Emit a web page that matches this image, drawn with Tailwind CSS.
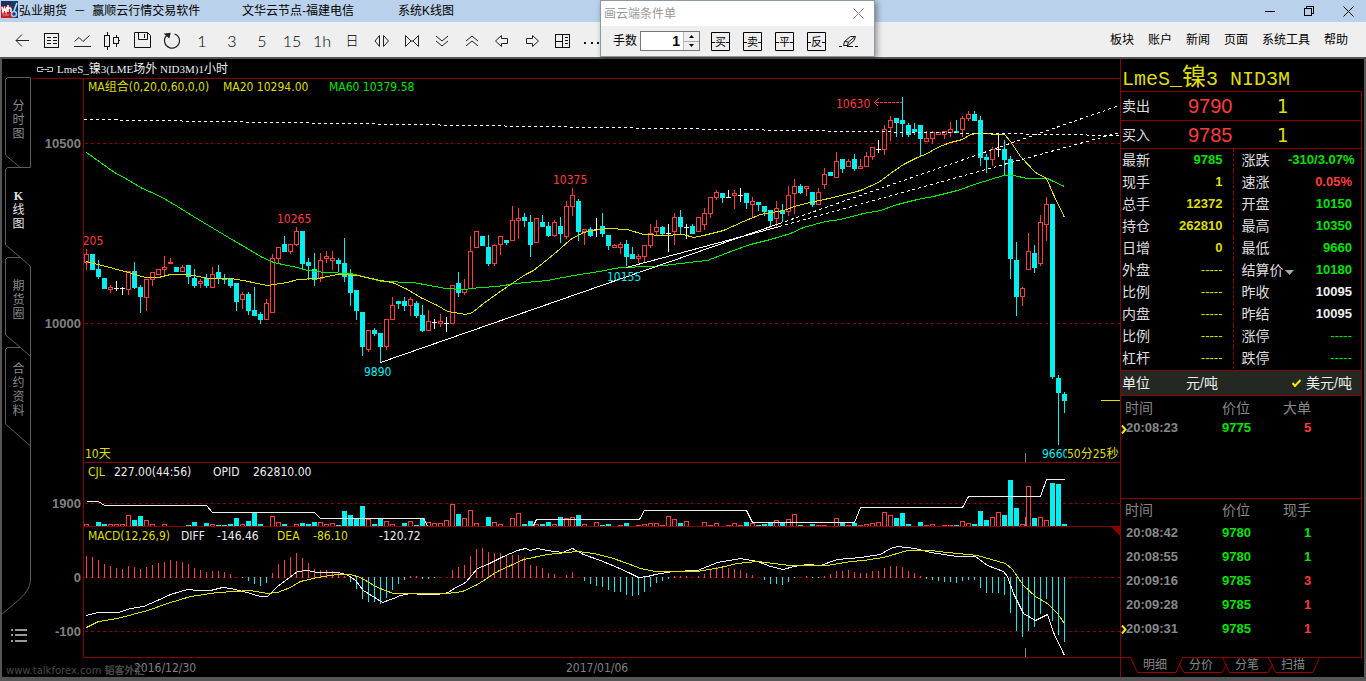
<!DOCTYPE html>
<html lang="zh-CN">
<head>
<meta charset="utf-8">
<title>弘业期货 － 赢顺云行情交易软件</title>
<script src="https://cdn.jsdelivr.net/npm/@tailwindcss/browser@4"></script>
</head>
<body class="min-h-screen flex flex-col bg-black text-xs font-['Liberation_Sans','Noto_Sans_CJK_SC',sans-serif]">

<!-- title bar -->
<header class="flex items-center h-[22px] bg-[#b9d1ea] text-black pl-px pr-3">
  <svg class="w-[17px] h-[17px] shrink-0 mr-px -mt-1" viewBox="0 0 17 17">
    <rect width="17" height="17" fill="#c81e1e"/><rect width="17" height="5" fill="#1c2f5c"/><path d="M10 0h7v17h-4l-3-7z" fill="#143a6e"/>
    <path d="M1 6l1 5 1.500-4 1.500 4 1-5M7 4v7m0-3c1-1.500 3-1.500 3 0v3" fill="none" stroke="#fff" stroke-width="1.500"/>
    <circle cx="13" cy="13" r="2.500" fill="none" stroke="#9ecbf5" stroke-width="1.500"/><path d="M16 2l-3 8" stroke="#cfe4fa" stroke-width="1.500"/>
    <path d="M2 14h6" stroke="#e88" />
  </svg>
  <h1 class="w-[223px] whitespace-pre shrink-0 leading-5">弘业期货  －  赢顺云行情交易软件</h1>
  <span class="w-[156px] shrink-0 leading-5">文华云节点-福建电信</span>
  <span class="leading-5">系统K线图</span>
  <div class="ml-auto flex gap-[29px]">
    <button aria-label="最小化" class="block"><svg class="w-[10px] h-[11px]" viewBox="0 0 10 11" stroke="#000" shape-rendering="crispEdges"><path d="M0 5.500h10"/></svg></button>
    <button aria-label="还原" class="block"><svg class="w-[10px] h-[11px]" viewBox="0 0 10 11" stroke="#000" fill="none" shape-rendering="crispEdges"><path d="M.5 2.500h7v7h-7zM2.500 2V.5h7v7H8"/></svg></button>
    <button aria-label="关闭" class="block"><svg class="w-[11px] h-[11px]" viewBox="0 0 11 11" stroke="#000" fill="none"><path d="M.5.500l10 10M10.500.500l-10 10"/></svg></button>
  </div>
</header>

<!-- toolbar -->
<div class="flex items-center justify-between h-[37px] bg-[#efefef] border-b-2 border-[#555] pl-[7px] pr-[18px] text-black">
  <div class="flex items-center h-8 mt-0.5 *:w-[30px] *:h-6 *:flex *:items-center *:justify-center *:shrink-0 text-base font-['Lato','Noto_Sans_CJK_SC',sans-serif] font-light">
    <button aria-label="返回"><svg class="size-5" viewBox="0 0 20 20" fill="none" stroke="#222"><path d="M4 9.500h13M10 3.500l-6 6 6 6"/></svg></button>
    <button aria-label="报价"><svg class="size-5" viewBox="0 0 20 20" fill="none" stroke="#111" shape-rendering="crispEdges"><path d="M2.500 2.500h14v14h-14zM5 6.500h4M11 6.500h4M5 9.500h4M11 9.500h4M5 12.500h4M11 12.500h4"/></svg></button>
    <button aria-label="分时"><svg class="size-5" viewBox="0 0 20 20" fill="none" stroke="#222"><path d="M2.500 10.500l4.500-4 4 4 6.500-6M2 15.500h17"/></svg></button>
    <button aria-label="K线"><svg class="size-5" viewBox="0 0 20 20" fill="none" stroke="#111" shape-rendering="crispEdges"><path d="M2.500 4.500h5v11h-5zM5.500 1v3M5.500 16v3M11.500 6.500h5v6h-5zM14.500 4v2M14.500 13v3M17 9.500h1"/></svg></button>
    <button aria-label="保存"><svg class="size-5" viewBox="0 0 20 20" fill="none" stroke="#111"><path d="M2.500 1.500h13l3 3v12h-16zM6.500 1.500v7h9v-7M12.500 3v4"/></svg></button>
    <button aria-label="刷新"><svg class="size-5" viewBox="0 0 20 20" fill="none" stroke="#222" stroke-width="1.200"><path d="M12.500 3c3 1 5 3.500 5 6.500a7.500 7.500 0 1 1-13-5"/><path d="M3 3l5-.5-1 4z" fill="#222"/></svg></button>
    <button>1</button><button>3</button><button>5</button><button>15</button><button>1h</button>
    <button class="text-[13px]">日</button>
    <button aria-label="缩小"><svg class="size-5" viewBox="0 0 20 20" fill="none" stroke="#222"><path d="M7.500 4.500v11L3 10zM11.500 4.500v11L16.500 10z"/></svg></button>
    <button aria-label="放大"><svg class="size-5" viewBox="0 0 20 20" fill="none" stroke="#222"><path d="M3.500 4.500v11L9 10zM16.500 4.500v11L11 10zM9 10h2"/></svg></button>
    <button aria-label="向下"><svg class="size-5" viewBox="0 0 20 20" fill="none" stroke="#222"><path d="M4 5l6 5 6-5M4 10l6 5 6-5"/></svg></button>
    <button aria-label="向上"><svg class="size-5" viewBox="0 0 20 20" fill="none" stroke="#222"><path d="M4 10l6-5 6 5M4 15l6-5 6 5"/></svg></button>
    <button aria-label="左移"><svg class="size-5" viewBox="0 0 20 20" fill="none" stroke="#222"><path d="M3.500 10l6-5.500v3h6v5h-6v3z"/></svg></button>
    <button aria-label="右移"><svg class="size-5" viewBox="0 0 20 20" fill="none" stroke="#222"><path d="M16.500 10l-6-5.500v3h-6v5h6v3z"/></svg></button>
    <button aria-label="布局"><svg class="size-5" viewBox="0 0 20 20" fill="none" stroke="#111" shape-rendering="crispEdges"><path d="M3.500 3.500h14v13h-14zM10.500 3v13M3 10.500h7M13 6.500h3M13 9.500h3M13 12.500h3"/></svg></button>
    <button aria-label="更多"><svg class="size-5" viewBox="0 0 20 20" fill="#111"><path d="M2 11h2v2H2zM9 11h2v2H9zM15 11h2v2h-2z"/></svg></button>
  </div>
  <nav class="flex gap-[14px]">
    <a href="#">板块</a><a href="#">账户</a><a href="#">新闻</a><a href="#">页面</a><a href="#">系统工具</a><a href="#">帮助</a>
  </nav>
</div>

<!-- floating order dialog -->
<section class="absolute left-[600px] top-0 w-[275px] border border-[#8a98a8] bg-[#efefef] shadow-[2px_2px_6px_rgba(0,0,0,0.4)] text-black" aria-label="画云端条件单">
  <div class="flex items-center justify-between h-[25px] bg-white pl-[3px] pr-[10px] text-[#999]">
    <h2>画云端条件单</h2>
    <button aria-label="关闭对话框"><svg class="size-[11px]" viewBox="0 0 11 11" stroke="#888" fill="none"><path d="M.5.500l10 10M10.500.500l-10 10"/></svg></button>
  </div>
  <div class="flex items-center h-[30px] pl-3">
    <label for="lots" class="mr-[3px]">手数</label>
    <div class="flex w-[60px] h-5 border border-[#777] bg-white mr-[11px]">
      <input id="lots" value="1" class="w-[42px] text-right pr-[3px] text-sm font-bold outline-none">
      <div class="flex flex-col w-4 bg-[#efefef] border-l border-[#bbb]">
        <button aria-label="增加" class="flex-1 flex items-center justify-center border-b border-[#aaa]"><svg class="w-[5px] h-[3px]" viewBox="0 0 5 3"><path d="M2.500 0L5 3H0z"/></svg></button>
        <button aria-label="减少" class="flex-1 flex items-center justify-center"><svg class="w-[5px] h-[3px]" viewBox="0 0 5 3"><path d="M2.500 3L5 0H0z"/></svg></button>
      </div>
    </div>
    <div class="flex gap-[13px] *:size-[19px]">
      <button><svg viewBox="0 0 19 19" fill="none" stroke="#000"><path d="M.5.500h18v18H.5zM1 10.500h3M15 10.500h3"/><text x="4" y="14" font-size="11" fill="#000" stroke="none">买</text></svg></button>
      <button><svg viewBox="0 0 19 19" fill="none" stroke="#000"><path d="M.5.500h18v18H.5zM1 10.500h3M15 10.500h3"/><text x="4" y="14" font-size="11" fill="#000" stroke="none">卖</text></svg></button>
      <button><svg viewBox="0 0 19 19" fill="none" stroke="#000"><path d="M.5.500h18v18H.5zM1 10.500h3M15 10.500h3"/><text x="4" y="14" font-size="11" fill="#000" stroke="none">平</text></svg></button>
      <button><svg viewBox="0 0 19 19" fill="none" stroke="#000"><path d="M.5.500h18v18H.5zM1 10.500h3M15 10.500h3"/><text x="4" y="14" font-size="11" fill="#000" stroke="none">反</text></svg></button>
      <button aria-label="擦除"><svg viewBox="0 0 19 19" fill="none" stroke="#111"><path d="M0 14.500h3M8 14.500h6M16 14.500h3M4.500 13.500l1-4 6-5h5l-1.500 4-6 5zM5.500 9.500l4 .5 6-5M9.500 10l-1 3"/></svg></button>
    </div>
  </div>
</section>

<!-- workspace -->
<main class="flex flex-1 border-x-2 border-b-4 border-[#555]">

  <!-- page tabs -->
  <nav class="relative w-[29px] shrink-0 pt-[18px] text-[#888]">
    <svg class="absolute left-0 top-0 w-[29px] h-[618px]" viewBox="2 59 29 618" fill="none" stroke="#5c5c5c">
      <path d="M19.500 167l-14-12V79.500l2-2h23v90h-23l-2 2V245l15 12.500h-13l-2 2V335l15 12.500h-13l-2 2V424l25 22M20.500 257.500l10 9V578c0 6-2 11-6 16l-7 7-15.500 13M20.500 347.500l10 9"/>
    </svg>
    <div class="relative flex flex-col *:h-[90px] *:pl-[10px] *:pr-[6px] *:pb-1 *:leading-[14px] *:break-all">
      <button>分时图</button>
      <button class="text-[#e4e4e4] font-['Liberation_Serif','Noto_Sans_CJK_SC',serif]"><b>K</b><br>线<br>图</button>
      <button>期货圈</button>
      <button>合约资料</button>
    </div>
    <button aria-label="列表" class="relative block ml-[9px] mt-[192px]"><svg class="w-4 h-[13px]" viewBox="0 0 16 13" fill="#999"><path d="M0 0h2v2H0zM4 0h12v2H4zM0 5h2v2H0zM4 5h12v2H4zM0 11h2v2H0zM4 11h12v2H4z"/></svg></button>
  </nav>

  <!-- charts -->
  <section class="relative flex-1 min-w-0 font-['DejaVu_Sans_Condensed','Noto_Sans_CJK_SC',sans-serif]">
    <div class="flex items-center h-[19px] pl-[6px] pt-px text-[11px] text-[#eee] font-['Liberation_Serif','Noto_Sans_CJK_SC',serif]">
      <svg class="w-4 h-[5px] mr-1" viewBox="0 0 16 5" fill="none" stroke="#bbb"><path d="M6 .5H.5v4H6M10 .5h5.500v4H10M4 2.500h8"/></svg>
      <span>LmeS_<span class="text-xs">镍</span>3(LME<span class="text-xs">场外</span> NID3M)1<span class="text-xs">小时</span></span>
    </div>

    <div class="relative">
      <svg id="price" class="block w-full h-auto" viewBox="31 78 1089 384" font-size="12" aria-label="K线"></svg>
      <div class="absolute left-[57px] top-px flex gap-2 whitespace-pre leading-4 text-[#dede00]">
        <span class="w-[127px]">MA组合(0,20,0,60,0,0)</span><span class="w-[98px]">MA20 10294.00</span><span class="text-[#00e400]">MA60 10379.58</span>
      </div>
      <span class="absolute left-[54px] bottom-0 leading-4 text-[#dede00]">10天</span>
      <span class="absolute right-0 bottom-0 w-[53px] leading-4 whitespace-nowrap text-[#dede00] bg-black">50分25秒</span>
    </div>
    <div class="relative">
      <svg id="volume" class="block w-full h-auto" viewBox="31 462 1089 64" font-size="12" aria-label="成交量"></svg>
      <div class="absolute left-[57px] top-0.5 flex leading-4 text-[#eee]">
        <span class="w-[26px] text-[#dede00]">CJL</span><span class="w-[99px]">227.00(44:56)</span><span class="w-10">OPID</span><span>262810.00</span>
      </div>
    </div>
    <div class="relative">
      <svg id="macd" class="block w-full h-auto" viewBox="31 526 1089 151" font-size="12" aria-label="MACD"></svg>
      <div class="absolute left-[57px] top-0.5 flex leading-4 text-[#eee]">
        <span class="w-[93px] text-[#dede00]">MACD(12,26,9)</span><span class="w-9">DIFF</span><span class="w-[60px]">-146.46</span><span class="w-9 text-[#dede00]">DEA</span><span class="w-[66px] text-[#dede00]">-86.10</span><span>-120.72</span>
      </div>
      <span class="absolute -left-[25px] bottom-0 leading-[13px] text-[#4a4a4a] whitespace-nowrap font-['DejaVu_Sans','Noto_Sans_CJK_SC',sans-serif] text-[10px]">www.talkforex.com <b>韬客外汇</b></span>
    </div>
  </section>

  <!-- quote panel -->
  <aside class="w-[244px] shrink-0 border-l border-[#8b0000] pr-[2px] text-sm text-[#dedede]">
    <h2 class="h-8 leading-9 pl-px text-2xl text-[#dede00] whitespace-nowrap"><span class="font-['Liberation_Mono'] text-xl">LmeS_</span>镍<span class="font-['Liberation_Mono'] text-xl">3 NID3M</span></h2>
    <div class="border border-l-0 border-[#8b0000]">
      <dl class="grid grid-cols-[66px_89px_1fr] items-center h-7 pl-px text-xl">
        <dt class="text-sm">卖出</dt><dd class="text-[#ff3c3c]">9790</dd><dd class="text-[#dede00] font-['DejaVu_Sans_Condensed']">1</dd>
      </dl>
      <dl class="grid grid-cols-[66px_89px_1fr] items-center h-[29px] pl-px text-xl border-y border-[#8b0000]">
        <dt class="text-sm">买入</dt><dd class="text-[#ff3c3c]">9785</dd><dd class="text-[#dede00] font-['DejaVu_Sans_Condensed']">1</dd>
      </dl>
      <table class="w-full table-fixed whitespace-nowrap text-left mb-px">
        <colgroup><col class="w-[51px]"><col class="w-[61px]"><col class="w-[55px]"><col></colgroup>
        <tbody id="quote"></tbody>
      </table>
      <div class="flex items-center h-[26px] pl-px pr-[9px] border-y border-[#8b0000] bg-[#232823] text-[#eee]">
        <span class="w-16">单位</span><button>元/吨</button>
        <button class="ml-auto flex items-center gap-[5px]"><svg class="w-[9px] h-2" viewBox="0 0 9 8" fill="none" stroke="#ee0" stroke-width="2"><path d="M.5 4l2.500 3L8.500 1"/></svg>美元/吨</button>
      </div>
      <div class="h-[102px]">
        <table class="w-full table-fixed text-left text-[#888]">
          <colgroup><col class="w-[101px]"><col class="w-[61px]"><col></colgroup>
          <thead><tr class="h-[23px] [&>th]:font-normal"><th class="pl-1">时间</th><th>价位</th><th>大单</th></tr></thead>
          <tbody id="big" class="text-[13px] font-bold"></tbody>
        </table>
      </div>
      <div class="h-[159px] border-t border-[#8b0000]">
        <table class="w-full table-fixed text-left text-[#888]">
          <colgroup><col class="w-[101px]"><col class="w-[61px]"><col></colgroup>
          <thead><tr class="h-[22px] [&>th]:font-normal"><th class="pl-1">时间</th><th>价位</th><th>现手</th></tr></thead>
          <tbody id="ticks" class="text-[13px] font-bold"></tbody>
        </table>
      </div>
    </div>
    <div class="relative -mt-px h-4 text-xs text-[#888]">
      <svg class="absolute left-0 top-0 w-[241px] h-4" viewBox="0 0 241 16" fill="none" stroke="#a00000"><path d="M9.500.500l7 15H55l6.500-15M58 7l5 8.500h38l5-8.500M101.500.500l7 15H147l5-8.500M147.500.500l7 15H192l6.500-15"/><path d="M10 .5h51" stroke="#000"/></svg>
      <div class="relative flex gap-[22px] pl-[22px] leading-4"><button>明细</button><button>分价</button><button>分笔</button><button>扫描</button></div>
    </div>
  </aside>
</main>

<script>
const RED='#ff3c3c', CYAN='#00f0f0', WHITE='#eeeeee', YEL='#dede00', GRN='#00f000', AXIS='#8b0000';
// one entry per hour: colour, high, body top, body bottom, low
const candles=`r249,254,262,270 c254,254,270,270 c260,269,277,279 c278,278,289,289 r285,287,289,293 w281,288,288,291 w287,288,288,295 r271,271,289,295 c262,271,288,289 c285,287,297,313
r279,279,297,311 r272,272,279,286 r269,269,274,274 r256,267,269,277 r258,262,263,263 c267,267,272,272 r265,267,271,271 c265,265,277,284 c269,278,286,288 r279,281,283,288
c274,278,286,288 r267,274,287,287 c265,272,279,284 c274,278,280,284 c278,279,286,288 c283,283,302,311 r292,294,299,309 c292,294,311,315 c287,310,316,316 c312,314,320,324
r299,303,319,319 r254,258,312,312 r247,247,258,263 c236,244,252,252 r244,244,251,254 r227,231,244,246 c231,231,264,269 c258,262,266,280 c253,269,280,286 r253,260,278,282
r251,256,258,263 r251,258,260,270 c258,260,264,272 c238,263,277,282 c269,273,293,306 c290,290,311,320 c312,312,347,356 r330,330,349,352 c328,330,334,336 c333,333,347,362
r319,319,346,350 r297,305,319,319 c301,301,304,309 c297,301,306,311 r297,299,305,316 c301,303,316,318 c305,315,331,332 r310,321,330,330 w319,322,322,329 r314,321,323,327
w317,323,323,332 r285,285,323,323 c272,283,293,297 r279,289,292,295 r236,251,288,288 r231,231,247,247 c236,236,246,246 c235,247,264,266 r244,245,263,266 r236,236,244,255
c240,240,243,245 r206,220,240,240 r208,218,220,239 c213,217,221,227 c215,222,245,257 r218,218,242,242 c215,222,227,227 c222,226,236,237 r220,222,235,237 c217,226,234,243
r201,206,236,239 r188,195,206,216 c199,201,232,241 r229,229,231,245 c227,229,236,237 w218,229,229,237 c213,226,234,237 c235,235,246,250 r244,245,247,247 r242,244,247,254
c240,244,257,266 c247,254,259,259 r254,256,258,263 r245,245,256,263 r224,233,245,248 r220,227,231,236 c226,227,234,236 w224,233,233,252 r213,217,231,245 c210,217,227,234
w224,227,227,239 c224,226,234,234 r217,217,231,231 r208,213,224,230 r197,197,213,218 r190,192,197,200 c193,193,198,203 w190,197,197,198 r190,193,195,209 w188,195,195,202
c193,193,203,209 r197,201,204,217 c202,202,205,211 c206,206,212,216 c210,210,221,227 r201,208,218,227 c204,210,214,222 r186,195,211,216 r179,186,193,214 c184,186,193,194
r186,186,188,196 c192,192,205,207 r188,192,204,204 r168,174,184,189 c172,172,176,176 r152,161,177,177 c159,159,169,173 r159,161,166,166 c154,159,169,171 r159,166,168,168
r152,156,166,166 r147,147,156,160 w140,149,149,153 r125,129,149,155 r116,120,127,141 c118,118,123,137 c97,120,124,137 c123,125,135,137 c123,129,132,135 c125,125,139,156
r131,138,141,141 r131,132,138,144 r132,132,134,134 r131,131,134,139 r122,129,132,137 c120,131,133,133 r116,118,129,137 r111,114,118,121 c111,114,121,121 c116,120,158,166
c154,157,160,173 r147,149,159,166 w133,149,149,157 c140,149,160,176 c156,159,259,279 c242,260,297,316 r287,288,296,306 r233,251,269,269 c245,253,268,273 r215,222,263,266
r197,204,224,241 c204,204,377,379 c375,378,393,445 c392,394,401,413`.split(/\s+/).map(s=>[s[0],...s.slice(1).split(',').map(Number)]);
// index, colour, bar top
const volumes=`0r524 2c522 3c524 4r524 5r524 6r524 7r515 8c520 9c516 10r520 11r524 13r524 17c525 18c522 20c523 21r524 22c525 23c525 24c524 25c518 26r524 27c521 28c512 29c524 31r516 32r522 33c524 35r524 36c523 37c524 38c522 39r522 40r524 41r523 42c525 43c511 44c515 45c519 46c506 47r519 48c524 49c519 50r521 51r524 53c523 54r521 55c525 56c518 57r522 58r523 59r523 60r520 61r504 62c514 63r518 64r510 65r523 67c517 68r522 69r524 71r518 72r513 73c524 74c521 75r524 76c524 77c522 78r524 79c517 80r518 81r517 82c515 83r524 85r522 86c525 87c524 89r525 90c523 92r525 93r524 94r523 95r523 96r525 97r516 98r519 99c523 100r521 103r522 104r525 105r523 107r525 108r523 109r525 110c522 111r523 112c525 113c524 114c523 115r520 116c522 117r519 118r514 119c525 121c524 122r525 123r525 125r518 126c522 127r525 128c523 129r525 130r524 131r523 132r522 133r512 134r515 135c518 136c513 137c524 139c522 140r525 141r524 143r525 144r525 145c525 146r521 147r523 148c524 149c511 150c520 151r517 152r512 153c515 154c480 155c508 156r524 157r486 158c518 159r517 160r520 161c483 162c484 163c524`.split(' ').map(s=>s.match(/(\d+)(\w)(\d{3})$/)).map(m=>[+m[1],m[2],+m[3]]);
const hist=[556,557,560,564,566,568,569,566,567,569,567,565,563,562,560,561,562,564,568,570,572,571,571,572,574,577,578,581,584,586,583,573,564,560,557,553,558,563,569,570,570,571,573,576,582,589,599,602,602,604,598,590,584,580,576,576,579,579,578,577,577,570,567,565,556,549,548,552,553,553,556,555,555,557,565,566,568,573,574,577,575,572,577,581,584,586,587,590,592,592,595,596,595,592,587,583,581,579,576,576,576,577,576,574,570,567,567,568,569,570,573,575,577,580,584,584,585,582,578,577,576,578,578,576,574,571,571,570,572,573,573,571,571,568,566,566,567,571,573,576,579,580,581,582,582,583,581,580,580,588,593,593,593,595,613,631,637,631,627,614,599,621,635,642];
const X=i=>86+6*i;
const rect=(x,y,w,h,f)=>`<rect x="${x}" y="${y}" width="${w}" height="${h}" fill="${f}"/>`;
const box=(x,y,w,h)=>`<path d="M${x+.5} ${y+.5}h${w}v${h}h${-w}z" fill="#000" stroke="${RED}"/>`;
const line=(p,c,d)=>`<polyline transform="translate(.5 .5)" points="${p}" fill="none" stroke="${c}"${d?` stroke-dasharray="${d}"`:''}/>`;
const text=(x,y,t,c,a)=>`<text x="${x}" y="${y}" fill="${c}"${a||''}>${t}</text>`;
const axis=(y,t)=>text(81,y+5,t,'#808080',' text-anchor="end" font-family="Liberation Sans" font-weight="bold" font-size="13"');
const crisp=s=>`<g shape-rendering="crispEdges">${s}</g>`;
const frame=(a,b)=>rect(83,a,1,b-a,AXIS);
const grid=y=>line(`84,${y} 1120,${y}`,AXIS,'3 3');

let s=frame(78,462)+rect(33,78,1087,1,AXIS)+grid(143)+grid(323);
candles.forEach(([k,h,t,b,l],i)=>{const x=X(i),c=k=='r'?RED:k=='c'?CYAN:WHITE;
  s+=rect(x,h,1,Math.max(1,l-h),c);
  if(k=='w') s+=rect(x-2,t,5,1,c);
  else if(k=='c') s+=rect(x-2,t,5,Math.max(1,b-t),c);
  else s+=box(x-2,t,4,b-t);});
s+=line('86,152 114,172 127,179 140,187 151,192 160,196 177,206 193,216 213,228 233,240 247,248 260,256 273,262 287,265 297,267 307,270 325,272 350,273 358,275 382,281 413,282 445,288 463,289 480,287 497,286 515,283 547,280 573,275 593,272 620,267 650,266 663,265 697,261 707,260 720,255 733,250 750,244 770,239 790,233 803,227 825,221 840,219 863,213 880,210 897,204 917,199 933,196 957,190 977,183 1003,175 1013,175 1027,178 1047,178 1053,181 1064,186',GRN);
s+=line('86,261 113,268 128,272 145,277 158,277 170,274 188,274 208,278 230,278 243,280 257,283 267,285 287,282 297,279 317,278 337,274 357,275 380,280 392,282 407,289 420,297 437,305 447,311 465,314 472,312 483,303 497,293 510,284 525,274 533,270 547,259 560,248 570,239 583,232 593,230 607,228 627,229 643,234 663,235 683,234 693,237 703,235 723,230 743,221 760,214 783,210 797,205 810,202 833,197 860,190 878,182 890,173 903,164 917,157 927,153 937,147 950,142 962,139 970,134 977,133 1004,134 1010,141 1020,156 1035,172 1046,178 1053,194 1064,217',YEL);
s+=line('380,362 779,223','#fff')+line('779,223 1119,105','#fff','3 3')+line('626,267 779,226','#fff')+line('779,226 1119,132','#fff','3 3')+line('84,119 1119,135','#fff','3 3');
s+=rect(1101,400,19,1,YEL)+rect(1025,453,1,9,'#888')+line('875,102 901,102',RED,'3 1')+line('878,98 874,102 878,106',RED);
price.innerHTML=crisp(s)+`<svg x="84" y="78" width="1036" height="384" viewBox="84 78 1036 384">${text(69,245,'10205',RED)}</svg>`+text(277,223,'10265',RED)+text(364,376,'9890',CYAN)+text(553,184,'10375',RED)+text(607,281,'10155',CYAN)+text(836,108,'10630',RED)+text(1042,458,'9660',CYAN)+axis(143,'10500')+axis(323,'10000');

s=frame(462,526)+rect(84,462,1036,1,AXIS)+grid(503);
volumes.forEach(([i,k,t])=>{s+=k=='c'?rect(X(i)-2,t,5,526-t,CYAN):box(X(i)-2,t,4,530-t)});
s+=line('86,501 98,501 104,505 206,505 212,512 314,512 320,518 423,518 428,527',WHITE)+line('532,527 536,519 639,519 644,510 746,510 752,522 854,522 860,507 962,507 968,496 1040,496 1046,479 1064,479',WHITE)+rect(1025,517,1,9,'#888');
volume.innerHTML=crisp(s)+axis(503,'1900');

s=frame(526,658)+rect(84,526,1036,1,AXIS)+rect(83,657,1037,1,AXIS)+grid(577)+grid(631)+`<path d="M1110 526h10v10z" fill="#8b0000"/>`;
hist.forEach((y,i)=>{if(y<577)s+=rect(X(i),y,1,578-y,RED);else if(y>577)s+=rect(X(i),577,1,y-577,CYAN)});
s+=line('86,615 97,612 118,612 130,608 143,606 157,600 170,594 187,589 197,590 210,590 222,587 230,588 243,591 260,596 267,596 277,586 297,571 307,570 317,572 338,572 348,575 355,580 363,590 382,602 393,598 400,595 410,593 423,594 437,594 448,592 452,589 465,582 477,568 487,564 503,556 517,550 525,548 530,550 537,548 547,550 562,552 572,548 583,554 600,560 617,567 630,573 638,577 647,576 655,574 673,571 697,570 717,562 740,558 757,561 770,566 783,569 793,566 807,564 820,565 837,559 860,557 880,554 890,548 897,546 915,548 930,552 957,556 975,556 987,565 1003,571 1007,576 1013,593 1023,613 1035,620 1047,614 1053,632 1064,655',WHITE);
s+=line('86,627 98,621 117,618 147,610 167,603 190,596 217,592 250,590 267,593 277,592 290,587 300,581 317,577 337,574 350,574 360,577 377,587 393,593 447,593 462,591 477,584 497,571 523,559 547,554 577,551 593,553 610,557 627,563 640,568 655,571 697,571 720,567 737,563 757,561 790,565 827,565 850,561 863,560 883,557 907,550 930,550 947,552 977,555 1005,563 1012,569 1023,585 1035,596 1047,603 1057,613 1064,623',YEL);
s+=rect(1025,648,1,9,'#888');
macd.innerHTML=crisp(s)+axis(577,'0')+axis(631,'-100')+text(134,672,'2016/12/30','#808080')+text(566,672,'2017/01/06','#808080');

const tone={g:'text-[#00e400]',r:'text-[#ff3c3c]',y:'text-[#dede00]',w:'text-[#eeeeee]'};
const D='-----';
quote.innerHTML=[['最新','9785','g','涨跌','-310/3.07%','g'],['现手','1','y','速涨','0.05%','r'],['总手','12372','y','开盘','10150','g'],['持仓','262810','y','最高','10350','g'],['日增','0','y','最低','9660','g'],['外盘',D,'y','结算价','10180','g'],['比例',D,'y','昨收','10095','w'],['内盘',D,'y','昨结','10095','w'],['比例',D,'y','涨停',D,'g'],['杠杆',D,'y','跌停',D,'g']]
 .map(([a,b,c,d,e,f])=>`<tr class="h-[22px] leading-[22px]"><th class="font-normal pl-px">${a}</th><td class="text-right pr-[10px] text-[13px] ${b==D?'':'font-bold'} ${tone[c]}">${b}</td><th class="font-normal pl-2 border-l border-dashed border-[#8b0000]">${d}${d=='结算价'?'<button aria-label="切换结算价" class="inline-block ml-px"><svg class="w-[9px] h-[5px]" viewBox="0 0 9 5" fill="#aaa"><path d="M0 0h9L4.500 5z"/></svg></button>':''}</th><td class="text-right pr-[9px] text-[13px] ${e==D?'':'font-bold'} ${tone[f]}">${e}</td></tr>`).join('');
const trade=([a,b,n,c,m])=>`<tr class="h-6"><td class="pl-[5px] relative">${m?'<svg class="absolute left-0 top-2 w-[6px] h-[9px]" viewBox="0 0 6 9" fill="none" stroke="#ee0" stroke-width="2"><path d="M1 .5l3.500 4L1 8.500"/></svg>':''}${a}</td><td class="${tone.g}">${b}</td><td class="pl-[21px] ${tone[c]}">${n}</td></tr>`;
big.innerHTML=[['20:08:23','9775','5','r',1]].map(trade).join('').replace('h-6','h-4').replace('top-2','top-1.5');
ticks.innerHTML=[['20:08:42','9780','1','g'],['20:08:55','9780','1','g'],['20:09:16','9785','3','r'],['20:09:28','9785','1','r'],['20:09:31','9785','1','r',1]].map(trade).join('');
</script>
</body>
</html>
